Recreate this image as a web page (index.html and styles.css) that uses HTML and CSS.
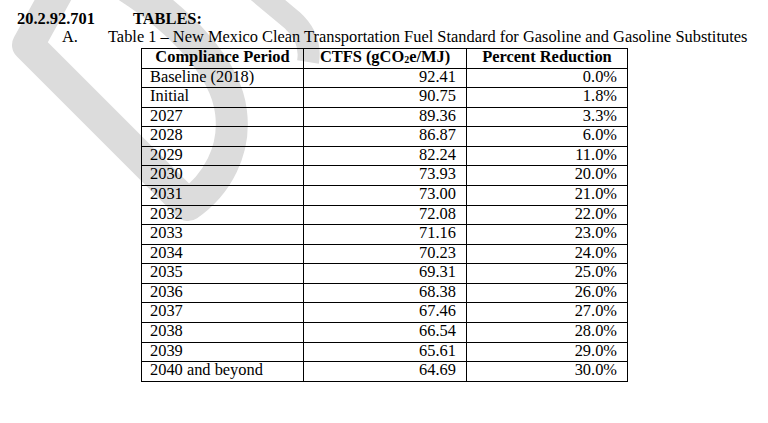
FILE: index.html
```html
<!DOCTYPE html>
<html>
<head>
<meta charset="utf-8">
<link rel="stylesheet" href="styles.css">
</head>
<body>
<svg class="watermark" width="768" height="423" viewBox="0 0 768 423" aria-hidden="true">
  <path d="M75,-40 L28,45 L188,205 C217,185 236,150 231,112 C226,68 180,20 125,-15" fill="none" stroke="#dcdcdc" stroke-width="32" stroke-linejoin="round"/>
  <path d="M250,-15 L292,20 Q312,38 308,62" fill="none" stroke="#dcdcdc" stroke-width="22"/>
</svg>
<div class="page">
  <div class="line">
    <span class="sec">20.2.92.701</span><span class="ttl">TABLES:</span>
  </div>
  <div class="line subline">
    <span class="lbl">A.</span><span>Table 1 – New Mexico Clean Transportation Fuel Standard for Gasoline and Gasoline Substitutes</span>
  </div>
  <table class="ctfs">
    <colgroup><col class="c1"><col class="c2"><col class="c3"></colgroup>
    <thead>
      <tr><th>Compliance Period</th><th>CTFS (gCO<span class="sub">2</span>e/MJ)</th><th>Percent Reduction</th></tr>
    </thead>
    <tbody>
      <tr><td>Baseline (2018)</td><td class="num">92.41</td><td class="num">0.0%</td></tr>
      <tr><td>Initial</td><td class="num">90.75</td><td class="num">1.8%</td></tr>
      <tr><td>2027</td><td class="num">89.36</td><td class="num">3.3%</td></tr>
      <tr><td>2028</td><td class="num">86.87</td><td class="num">6.0%</td></tr>
      <tr><td>2029</td><td class="num">82.24</td><td class="num">11.0%</td></tr>
      <tr><td>2030</td><td class="num">73.93</td><td class="num">20.0%</td></tr>
      <tr><td>2031</td><td class="num">73.00</td><td class="num">21.0%</td></tr>
      <tr><td>2032</td><td class="num">72.08</td><td class="num">22.0%</td></tr>
      <tr><td>2033</td><td class="num">71.16</td><td class="num">23.0%</td></tr>
      <tr><td>2034</td><td class="num">70.23</td><td class="num">24.0%</td></tr>
      <tr><td>2035</td><td class="num">69.31</td><td class="num">25.0%</td></tr>
      <tr><td>2036</td><td class="num">68.38</td><td class="num">26.0%</td></tr>
      <tr><td>2037</td><td class="num">67.46</td><td class="num">27.0%</td></tr>
      <tr><td>2038</td><td class="num">66.54</td><td class="num">28.0%</td></tr>
      <tr><td>2039</td><td class="num">65.61</td><td class="num">29.0%</td></tr>
      <tr><td>2040 and beyond</td><td class="num">64.69</td><td class="num">30.0%</td></tr>
    </tbody>
  </table>
</div>
</body>
</html>
```
FILE: styles.css
```css
html, body {
  margin: 0;
  padding: 0;
  background: #fff;
}
body {
  width: 768px;
  height: 423px;
  overflow: hidden;
  position: relative;
  font-family: "Liberation Serif", "Times New Roman", serif;
  font-size: 16.4px;
  color: #000;
}
.watermark {
  position: absolute;
  left: 0;
  top: 0;
  z-index: 0;
}
.page {
  position: relative;
  z-index: 1;
  padding: 10.4px 0 0 17px;
}
.line {
  display: flex;
  line-height: 18px;
  white-space: nowrap;
}
.sec {
  font-weight: bold;
  width: 116px;
}
.ttl {
  font-weight: bold;
}
.subline {
  padding-left: 45px;
}
.lbl {
  width: 46px;
}
.ctfs {
  margin: 1.7px 0 0 124px;
  border-collapse: collapse;
  table-layout: fixed;
  width: 486px;
  border: 1px solid #000;
}
.c1 { width: 162px; }
.c2 { width: 163px; }
.c3 { width: 161px; }
.ctfs th,
.ctfs td {
  border: 1px solid #000;
  padding: 0 0 2px 0;
  line-height: 16.57px;
  height: 16.57px;
  white-space: nowrap;
}
.ctfs th {
  font-weight: bold;
  text-align: center;
}
.ctfs td {
  text-align: left;
  padding-left: 8px;
}
.ctfs td.num {
  text-align: right;
  padding-left: 0;
  padding-right: 10px;
}
.sub {
  font-size: 10px;
  vertical-align: -1px;
  line-height: 0;
}
```
